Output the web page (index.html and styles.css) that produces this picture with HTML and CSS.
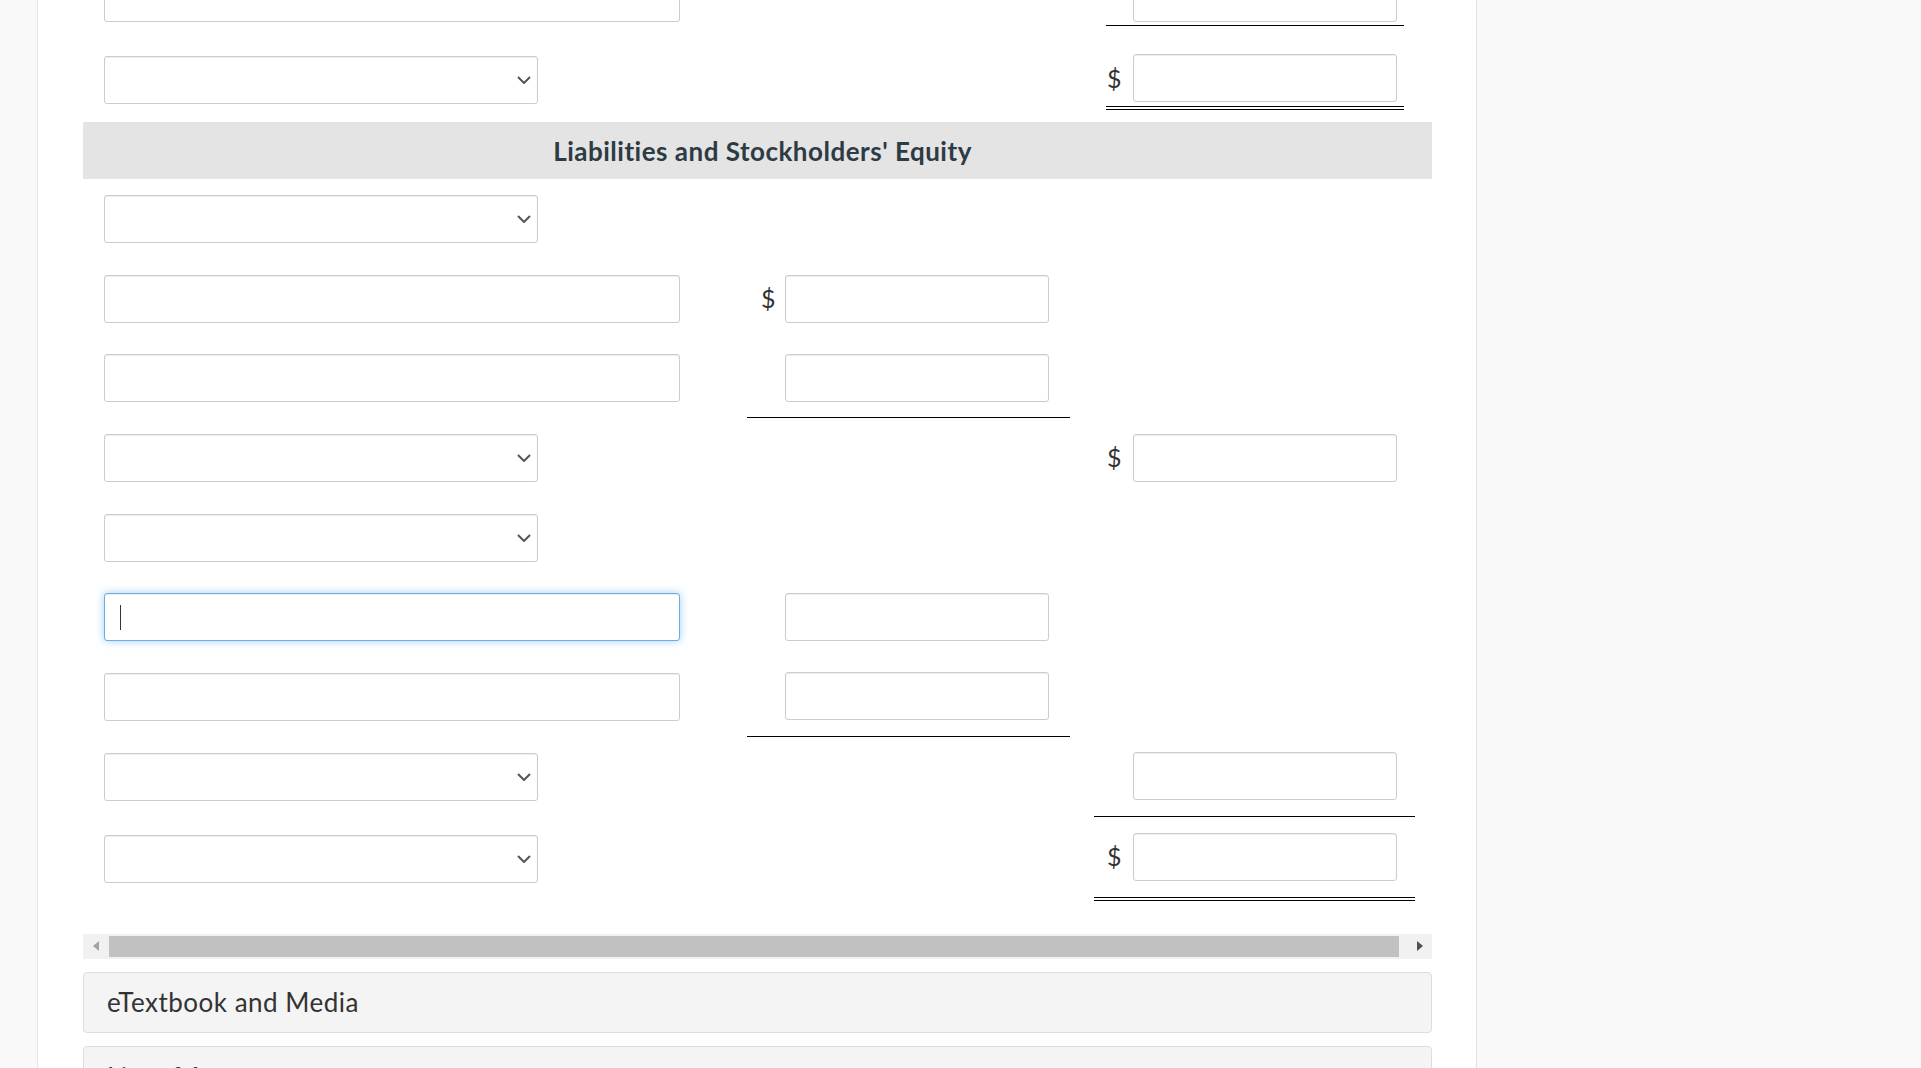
FILE: index.html
```html
<!DOCTYPE html>
<html lang="en">
<head>
<meta charset="utf-8">
<title>Balance Sheet</title>
<link rel="stylesheet" href="styles.css">
</head>
<body>
<div class="page">
  <aside class="rail-left"></aside>
  <main class="content">
    <div class="sheet">
      <div class="trow trow-a">
        <div class="c-left"><input class="field wide" type="text"></div>
        <div class="c-top line"><span class="cur"></span><input class="field num" type="text"></div>
      </div>
      <div class="trow trow-b">
        <div class="c-left"><span class="sel"><select class="field select"><option></option></select><svg class="chev" viewBox="0 0 14 8" width="14" height="8"><path d="M1 1l6 6 6-6" fill="none" stroke="#555" stroke-width="2"/></svg></span></div>
        <div class="c-top dline"><span class="cur">$</span><input class="field num" type="text"></div>
      </div>

      <div class="band">Liabilities and Stockholders' Equity</div>

      <div class="row">
        <div class="c-left"><span class="sel"><select class="field select"><option></option></select><svg class="chev" viewBox="0 0 14 8" width="14" height="8"><path d="M1 1l6 6 6-6" fill="none" stroke="#555" stroke-width="2"/></svg></span></div>
        <div class="c-mid"></div><div></div><div class="c-right"></div>
      </div>
      <div class="row">
        <div class="c-left"><input class="field wide" type="text"></div>
        <div class="c-mid"><span class="cur">$</span><input class="field num" type="text"></div><div></div><div class="c-right"></div>
      </div>
      <div class="row">
        <div class="c-left"><input class="field wide" type="text"></div>
        <div class="c-mid line"><span class="cur"></span><input class="field num" type="text"></div><div></div><div class="c-right"></div>
      </div>
      <div class="row">
        <div class="c-left"><span class="sel"><select class="field select"><option></option></select><svg class="chev" viewBox="0 0 14 8" width="14" height="8"><path d="M1 1l6 6 6-6" fill="none" stroke="#555" stroke-width="2"/></svg></span></div>
        <div class="c-mid"></div><div></div><div class="c-right"><span class="cur">$</span><input class="field num" type="text"></div>
      </div>
      <div class="row">
        <div class="c-left"><span class="sel"><select class="field select"><option></option></select><svg class="chev" viewBox="0 0 14 8" width="14" height="8"><path d="M1 1l6 6 6-6" fill="none" stroke="#555" stroke-width="2"/></svg></span></div>
        <div class="c-mid"></div><div></div><div class="c-right"></div>
      </div>
      <div class="row">
        <div class="c-left"><span class="caret-wrap"><input class="field wide focus" type="text"><span class="caret"></span></span></div>
        <div class="c-mid"><span class="cur"></span><input class="field num" type="text"></div><div></div><div class="c-right"></div>
      </div>
      <div class="row">
        <div class="c-left"><input class="field wide" type="text"></div>
        <div class="c-mid line"><span class="cur"></span><input class="field num" type="text"></div><div></div><div class="c-right"></div>
      </div>
      <div class="row">
        <div class="c-left"><span class="sel"><select class="field select"><option></option></select><svg class="chev" viewBox="0 0 14 8" width="14" height="8"><path d="M1 1l6 6 6-6" fill="none" stroke="#555" stroke-width="2"/></svg></span></div>
        <div class="c-mid"></div><div></div><div class="c-right line"><span class="cur"></span><input class="field num" type="text"></div>
      </div>
      <div class="row row-last">
        <div class="c-left"><span class="sel"><select class="field select"><option></option></select><svg class="chev" viewBox="0 0 14 8" width="14" height="8"><path d="M1 1l6 6 6-6" fill="none" stroke="#555" stroke-width="2"/></svg></span></div>
        <div class="c-mid"></div><div></div><div class="c-right dline"><span class="cur">$</span><input class="field num" type="text"></div>
      </div>

      <div class="hscroll">
        <span class="arr arr-l"></span>
        <span class="thumb"></span>
        <span class="arr arr-r"></span>
      </div>

      <div class="panel">eTextbook and Media</div>
      <div class="panel panel-2">List of Accounts</div>
    </div>
  </main>
  <aside class="rail-right"></aside>
</div>
</body>
</html>
```

FILE: styles.css
```css
* { box-sizing: border-box; }
html, body { margin: 0; padding: 0; height: 100%; }
body {
  font-family: Lato, "Open Sans", "Liberation Sans", sans-serif;
  color: #333;
  background: #fff;
  overflow: hidden;
  font-variant-ligatures: none;
}
.page { display: flex; height: 1068px; overflow: hidden; }
.rail-left { width: 38px; flex: none; background: #f9f9f9; border-right: 1px solid #e5e5e5; }
.content { width: 1438px; flex: none; background: #fff; overflow: hidden; }
.rail-right { flex: 1; background: #f9f9f9; border-left: 1px solid #e2e2e2; }

.sheet { margin-left: 45px; width: 1349px; margin-top: -26px; }

.field {
  display: block;
  height: 48px;
  border: 1px solid #ccc;
  border-radius: 3px;
  background: #fff;
  box-shadow: inset 0 1px 1px rgba(0,0,0,.075);
  font: inherit;
  outline: none;
  padding: 0 12px;
}
.wide { width: 576px; }
.num { width: 264px; }
.select { width: 434px; appearance: none; -webkit-appearance: none; }
.sel { position: relative; display: block; width: 434px; }
.chev { position: absolute; right: 7px; top: 20px; }

.focus {
  border-color: #66afe9;
  box-shadow: inset 0 1px 1px rgba(0,0,0,.075), 0 0 8px rgba(102,175,233,.6);
}
.caret-wrap { position: relative; display: block; width: 576px; }
.caret { position: absolute; left: 16px; top: 12px; width: 1px; height: 25px; background: #333; }

.cur { display: inline-block; width: 26px; flex: none; font-size: 25px; color: #333; line-height: 1; }

/* top (scrolled) section */
.trow { display: grid; grid-template-columns: 1011px 338px; align-items: start; }
.c-left { padding-left: 21px; }
.c-top { display: flex; align-items: flex-start; margin-left: 12px; width: 298px; padding-left: 1px; }
.c-top .cur { align-self: center; }
.trow-a .c-top { padding-bottom: 3px; }
.trow-b { margin-top: 28px; }
.trow-b .c-left { padding-top: 2px; }
.trow-b .c-top { padding-bottom: 4px; }

.band {
  margin-top: 12px;
  height: 57px;
  background: #e4e4e4;
  display: flex;
  align-items: center;
  justify-content: center;
  padding-left: 10px;
  font-weight: 700;
  font-size: 26px;
  letter-spacing: 0.5px;
  color: #2d3b45;
}

/* main rows */
.row {
  display: grid;
  grid-template-columns: 664px 323px 24px 321px;
  height: 79.7px;
  align-items: stretch;
}
.row > .c-left { display: flex; align-items: center; }
.c-mid, .c-right { display: flex; align-items: center; }
.c-mid { padding-left: 14px; }
.c-mid .cur { width: 24px; }
.c-right { padding-left: 13px; }
.line { border-bottom: 1px solid #000; }
.dline { border-bottom: 4px double #000; }
.row-last { height: 84px; }

/* horizontal scrollbar */
.hscroll {
  margin-top: 33px;
  height: 25px;
  background: #f1f1f1;
  display: flex;
  align-items: center;
  padding-left: 10px;
}
.arr { width: 0; height: 0; border-style: solid; }
.arr-l { border-width: 5px 6px 5px 0; border-color: transparent #a3a3a3 transparent transparent; }
.arr-r { border-width: 5.5px 0 5.5px 6px; border-color: transparent transparent transparent #505050; margin-left: 18px; }
.thumb { width: 1290px; height: 21px; background: #c1c1c1; margin-left: 10px; }

.panel {
  margin-top: 13px;
  height: 61px;
  background: #f4f4f4;
  border: 1px solid #ddd;
  border-radius: 4px;
  display: flex;
  align-items: center;
  padding-left: 23px;
  font-size: 26px;
  letter-spacing: 0.5px;
  color: #333;
}
.panel-2 { align-items: flex-start; padding-top: 14px; height: 40px; overflow: hidden; }
```
